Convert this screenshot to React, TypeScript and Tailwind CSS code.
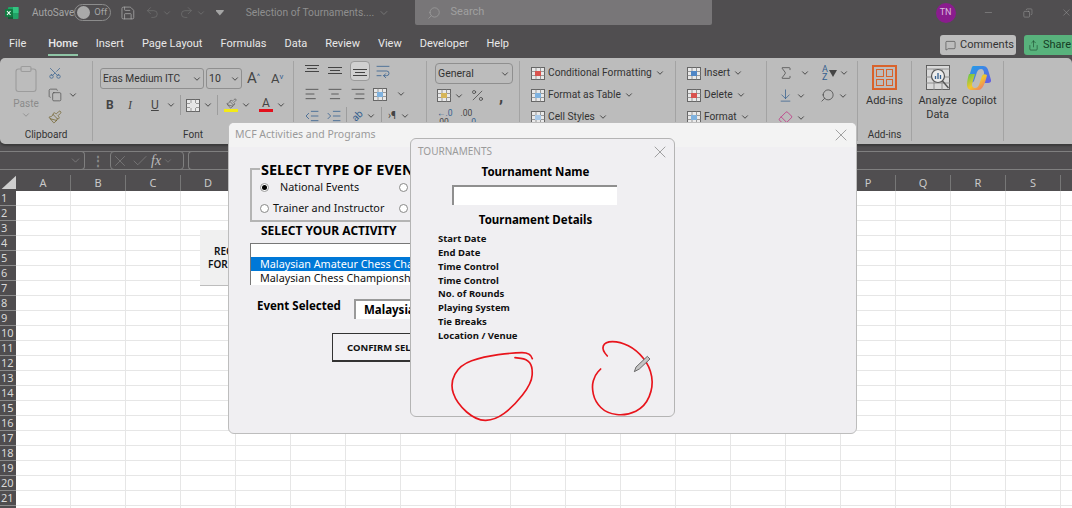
import {
  AlignCenter, AlignLeft, AlignRight, ArrowDownToLine, Check, ChevronDown, Clipboard, Copy, Eraser, IndentDecrease, IndentIncrease,
  MessageSquare, Minus, Paintbrush, Percent, Redo2, Save, Scissors, Search, Share, Sigma, Undo2, WrapText, X,
} from "lucide-react";

const COLUMNS = "ABCDEFGHIJKLMNOPQRST".split("");
const ROWS = Array.from({ length: 22 }, (_, i) => i + 1);
const TABS = ["File", "Home", "Insert", "Page Layout", "Formulas", "Data", "Review", "View", "Developer", "Help"];
const DETAILS = ["Start Date", "End Date", "Time Control", "Time Control", "No. of Rounds", "Playing System", "Tie Breaks", "Location / Venue"];

const LEFT_CIRCLE: [number, number][] = [[397, 686], [392, 668], [340, 668], [250, 680], [180, 705], [150, 760], [170, 820], [230, 872], [285, 870], [340, 830], [395, 760], [398, 710], [380, 687], [345, 683]];
const RIGHT_CIRCLE: [number, number][] = [[622, 678], [605, 660], [615, 635], [660, 635], [710, 660], [750, 710], [760, 770], [735, 830], [680, 857], [620, 850], [585, 815], [575, 770], [585, 735], [602, 717]];

function smoothPath(points: [number, number][]) {
  let d = `M${points[0][0]} ${points[0][1]}`;
  for (let i = 1; i < points.length - 1; i++) {
    const [x, y] = points[i];
    const [nx, ny] = points[i + 1];
    d += ` Q${x} ${y} ${(x + nx) / 2} ${(y + ny) / 2}`;
  }
  const last = points[points.length - 1];
  return `${d} L${last[0]} ${last[1]}`;
}

function Caret({ className = "" }: { className?: string }) {
  return <ChevronDown size={10} strokeWidth={2} className={`shrink-0 text-[#333] ${className}`} />;
}

function Lines({ align }: { align: "left" | "center" | "right" }) {
  const Icon = align === "left" ? AlignLeft : align === "center" ? AlignCenter : AlignRight;
  return <Icon size={16} strokeWidth={1.2} className="shrink-0 text-[#444]" />;
}

// vertical alignment buttons: three rules pushed to the top, middle or bottom
function VerticalLines({ offset }: { offset: number }) {
  return (
    <svg width="16" height="14" viewBox="0 0 16 14" stroke="#444" strokeWidth="1" className="shrink-0">
      <path d={`M1 ${1.5 + offset}h14M3 ${4.5 + offset}h10M1 ${7.5 + offset}h14`} />
    </svg>
  );
}

function ExcelLogo() {
  return (
    <svg width="14" height="14" viewBox="0 0 14 14">
      <rect x="3" y="1" width="10.5" height="12" rx="1" fill="#21a366" />
      <rect x="8" y="1" width="5.5" height="6" fill="#33c481" />
      <rect x="3" y="7" width="5" height="6" fill="#185c37" />
      <rect x="0" y="3" width="8" height="8" rx="1" fill="#107c41" />
      <path d="M2 5l3.5 4M5.5 5L2 9" stroke="#fff" strokeWidth="1.1" />
    </svg>
  );
}

function CopilotLogo() {
  return (
    <svg width="26" height="26" viewBox="0 0 26 26">
      <defs>
        <linearGradient id="cop1" x1="0" y1="0" x2="1" y2="1">
          <stop offset="0" stopColor="#1fa2e8" />
          <stop offset="1" stopColor="#6a5be0" />
        </linearGradient>
        <linearGradient id="cop2" x1="0" y1="0" x2="1" y2="1">
          <stop offset="0" stopColor="#58c84a" />
          <stop offset="0.5" stopColor="#f3c62d" />
          <stop offset="1" stopColor="#ec5e7e" />
        </linearGradient>
      </defs>
      <path d="M8 1h9c4 0 5 3 6 7l2 7c.5 2-1 3-3 3h-6l2-9c.5-3-1-5-3-5-2 0-3 1-4 3L8 16c-1 2-4 2-6 1 1-5 3-12 4-15 .4-.8 1-1 2-1z" fill="url(#cop1)" />
      <path d="M3 9h6l-3 10c-.5 2 1 4 3 4 2 0 3-1 4-3l3-9c1-2 3-2 5-1-1 5-3 11-5 13-1 1-2 2-4 2H6c-3 0-5-2-5-5 0-4 1-8 2-11z" fill="url(#cop2)" />
    </svg>
  );
}

function AnalyzeIcon() {
  return (
    <svg width="24" height="25" viewBox="0 0 24 25" fill="none" stroke="#555" strokeWidth="0.9">
      <rect x="0.5" y="0.5" width="23" height="24" fill="#d9d9d9" />
      <path d="M0 4h24M0 12h24M0 18h24M8 4v21M16 4v21" stroke="#8a8a8a" />
      <circle cx="12" cy="11" r="6.5" fill="#ececec" strokeWidth="1.2" />
      <path d="M9.5 14v-3M12 14V8M14.5 14v-4" stroke="#35608f" strokeWidth="1.3" />
      <path d="M16.5 16l6 7" strokeWidth="1.4" />
    </svg>
  );
}

function TableIcon({ tone }: { tone: string }) {
  return (
    <svg width="14" height="13" viewBox="0 0 14 13" fill="none" className="shrink-0">
      <rect x="0.5" y="0.5" width="13" height="12" fill="#e9e9e9" stroke="#666" />
      <path d="M0 4.5h14M0 8.5h14M5 0v13M9.5 0v13" stroke="#777" strokeWidth="0.7" />
      <rect x="4" y="4" width="6" height="5" fill={tone} />
    </svg>
  );
}

function RibbonGroup({ width, label, children }: { width: string; label?: string; children: React.ReactNode }) {
  return (
    <div className={`flex h-full shrink-0 flex-col border-r border-[#a3a3a3] ${width}`}>
      <div className="min-h-0 flex-1">{children}</div>
      {label ? <div className="text-center text-[10px] leading-[12px] text-[#333]">{label}</div> : null}
    </div>
  );
}

function StackItem({ icon, label }: { icon: React.ReactNode; label: string }) {
  return (
    <div className="flex h-[22px] items-center gap-[3px] whitespace-nowrap text-[10.2px] text-[#333]">
      {icon}
      <span>{label}</span>
      <Caret />
    </div>
  );
}

function ActivitiesDialog() {
  return (
    <div className="absolute left-[228px] top-[122px] h-[312px] w-[629px] overflow-hidden rounded-[6px] border border-[#bdbdbd] bg-[#f0eff2] font-['Noto_Sans',sans-serif]">
      <div className="flex h-[24px] items-center justify-between bg-[#f3f3f3] pl-[6px] pr-[5px] text-[10.5px] text-[#9a9a9a]">
        <span>MCF Activities and Programs</span>
        <X size={20} strokeWidth={0.8} className="text-[#777]" />
      </div>
      <div className="ml-[21px] mt-[21px] h-[54px] w-[300px] border-2 border-r-0 border-[#b4b4b4]">
        <div className="-mt-[9px] ml-[8px] w-fit whitespace-nowrap bg-[#f0eff2] px-[1px] text-[14.5px] font-bold leading-[17px] text-black">
          SELECT TYPE OF EVENT
        </div>
        <div className="-mt-[1px] flex h-[21px] items-center text-[10.8px] text-[#111]">
          <span className="ml-[8px] flex size-[9px] shrink-0 items-center justify-center rounded-full border border-[#999] bg-white">
            <span className="size-[5px] rounded-full bg-black" />
          </span>
          <span className="ml-[11px] w-[119px] shrink-0">National Events</span>
          <span className="size-[9px] shrink-0 rounded-full border border-[#888] bg-white" />
        </div>
        <div className="flex h-[21px] items-center text-[10.8px] text-[#111]">
          <span className="ml-[8px] size-[9px] shrink-0 rounded-full border border-[#888] bg-white" />
          <span className="ml-[4px] w-[126px] shrink-0">Trainer and Instructor</span>
          <span className="size-[9px] shrink-0 rounded-full border border-[#888] bg-white" />
          <span className="ml-[2px]">S</span>
        </div>
      </div>
      <div className="ml-[32px] mt-[1px] text-[12px] font-bold leading-[15px] text-black">SELECT YOUR ACTIVITY</div>
      <div className="ml-[21px] mt-[5px] h-[42px] w-[300px] overflow-hidden border-l border-t border-[#777] bg-white text-[10.8px] leading-[14px]">
        <div className="h-[13px]" />
        <div className="whitespace-nowrap bg-[#0078d7] pl-[9px] text-white">Malaysian Amateur Chess Championship</div>
        <div className="whitespace-nowrap pl-[9px] text-[#111]">Malaysian Chess Championship</div>
      </div>
      <div className="ml-[28px] mt-[14px] flex items-start">
        <span className="w-[97px] shrink-0 text-[11.5px] font-bold leading-[14px] text-black">Event Selected</span>
        <span className="h-[20px] w-[100px] border-l-2 border-t-2 border-[#9a9a9a] bg-white pl-[8px] text-[11.5px] font-bold leading-[18px] text-black">
          Malaysian
        </span>
      </div>
      <div className="ml-[103px] mt-[14px] h-[29px] w-[180px] whitespace-nowrap border border-b-2 border-[#333] bg-[#f2f1f4] pl-[14px] text-[9.5px] font-bold leading-[27px] text-[#111]">
        CONFIRM SELECTION
      </div>
    </div>
  );
}

function TournamentsDialog() {
  return (
    <div className="absolute left-[410px] top-[138px] flex h-[279px] w-[265px] flex-col rounded-[6px] border border-[#b4b4b4] bg-[#f0eff2] font-['Noto_Sans',sans-serif]">
      <div className="flex h-[25px] shrink-0 items-center justify-between pl-[7px] pr-[4px] text-[10px] text-[#9a9a9a]">
        <span>TOURNAMENTS</span>
        <X size={20} strokeWidth={0.8} className="text-[#777]" />
      </div>
      <div className="pr-[14px] text-center text-[11.5px] font-bold leading-[16px] text-black">Tournament Name</div>
      <div className="ml-[41px] mt-[5px] h-[20px] w-[165px] shrink-0 border-l-2 border-t-2 border-[#8f8f8f] bg-white" />
      <div className="mt-[7px] pr-[14px] text-center text-[11.5px] font-bold leading-[16px] text-black">Tournament Details</div>
      <div className="ml-[27px] mt-[4px] text-[9.5px] font-bold leading-[13.85px] text-[#111]">
        {DETAILS.map((detail, index) => (
          <div key={index}>{detail}</div>
        ))}
      </div>
      {/* pen annotation drawn over the form, runs past the bottom edge */}
      <svg className="absolute left-0 top-0 h-[277px] w-[263px] overflow-visible" viewBox="33 27 789 831" fill="none">
        <path d={smoothPath(LEFT_CIRCLE)} stroke="#e8141c" strokeWidth="5" strokeLinecap="round" />
        <path d={smoothPath(RIGHT_CIRCLE)} stroke="#e8141c" strokeWidth="5" strokeLinecap="round" />
        <path d="M703 725l5-14 34-32 8 8-32 30z" fill="#c4c4c4" stroke="#555" strokeWidth="2.5" />
      </svg>
    </div>
  );
}

function TitleBar() {
  return (
    <div className="flex h-[25px] shrink-0 items-center whitespace-nowrap text-[10px] text-[#a5a5a5]">
      <span className="ml-[5px]"><ExcelLogo /></span>
      <span className="ml-[13px] w-[43px]">AutoSave</span>
      <span className="flex h-[17px] w-[37px] items-center rounded-full border border-[#8c8c8c] pl-[2px]">
        <span className="size-[13px] rounded-full bg-[#a9a9a9]" />
        <span className="ml-[4px] text-[9.5px]">Off</span>
      </span>
      <Save size={16} strokeWidth={1.2} className="ml-[9px] text-[#a8a8a8]" />
      <Undo2 size={15} strokeWidth={1.2} className="ml-[10px] text-[#707070]" />
      <Caret className="ml-[2px] !text-[#707070]" />
      <Redo2 size={15} strokeWidth={1.2} className="ml-[7px] text-[#707070]" />
      <Caret className="ml-[2px] !text-[#707070]" />
      <span className="ml-[10px] h-[6px] w-[8px] bg-[#a5a5a5] [clip-path:polygon(0_0,100%_0,100%_25%,50%_100%,0_25%)]" />
      <span className="ml-[22px] w-[132px] shrink-0 text-[10.3px] text-[#8f8f8f]">Selection of Tournaments....</span>
      <ChevronDown size={12} strokeWidth={1.2} className="text-[#8f8f8f]" />
      <div className="ml-[25px] flex h-[25px] w-[297px] shrink-0 items-center rounded-b-[2px] bg-[#787678] pl-[12px] text-[#a0a0a0]">
        <Search size={14} strokeWidth={1.2} className="-scale-x-100" />
        <span className="ml-[10px] text-[11px]">Search</span>
      </div>
      <span className="ml-[224px] flex size-[20px] shrink-0 items-center justify-center rounded-full bg-[#8a1c8e] text-[9px] text-[#d9b8dc]">TN</span>
      <Minus size={11} strokeWidth={1} className="ml-[27px]" />
      <Copy size={10} strokeWidth={1.2} className="ml-[30px] -scale-x-100" />
      <X size={11} strokeWidth={1} className="ml-[28px]" />
    </div>
  );
}

function TabBar() {
  return (
    <div className="flex h-[33px] shrink-0 items-end pb-[2px] text-[11px] text-[#e8e8e8]">
      <div className="ml-[9px] flex gap-[18px]">
        {TABS.map((tab) => (
          <span key={tab} className={tab === "Home" ? "h-[20px] border-b-2 border-[#8fc5a6] font-medium leading-[16px]" : "h-[20px] leading-[16px] first:mr-[4px]"}>
            {tab}
          </span>
        ))}
      </div>
      <div className="ml-auto flex items-center gap-[8px] pb-[1px]">
        <span className="flex h-[20px] w-[76px] items-center gap-[4px] rounded-[3px] bg-[#bdbdbd] pl-[5px] text-[11px] text-[#333]">
          <MessageSquare size={11} strokeWidth={1.2} />
          Comments
        </span>
        <span className="flex h-[20px] w-[48px] items-center gap-[4px] rounded-l-[3px] bg-[#58b27c] pl-[4px] text-[11px] text-[#153d25]">
          <Share size={11} strokeWidth={1.2} />
          Share
        </span>
      </div>
    </div>
  );
}

function Ribbon() {
  return (
    <div className="flex h-[86px] shrink-0 rounded-t-[5px] rounded-bl-[5px] bg-[#bcbcbc] py-[3px] shadow-[0_2px_2px_#3a3a3a]">
      <RibbonGroup width="w-[93px]" label="Clipboard">
        <div className="flex">
          <div className="ml-[13px] mt-[3px] flex w-[26px] flex-col items-center text-[10px] leading-[13px] text-[#8b8b8b]">
            <Clipboard size={30} strokeWidth={0.9} className="text-[#9c9c9c]" />
            <span className="mt-[3px]">Paste</span>
            <Caret className="!text-[#8b8b8b]" />
          </div>
          <div className="ml-[9px] mt-[5px] flex flex-col gap-[8px]">
            <Scissors size={14} strokeWidth={1.2} className="rotate-[-90deg] text-[#35608f]" />
            <span className="flex items-center gap-[6px]">
              <Copy size={14} strokeWidth={1.1} className="text-[#444]" />
              <Caret />
            </span>
            <Paintbrush size={14} strokeWidth={1.2} className="text-[#6b5a20]" />
          </div>
        </div>
      </RibbonGroup>
      <RibbonGroup width="w-[201px]" label="Font">
        <div className="mt-[7px] flex items-center pl-[7px]">
          <div className="flex h-[21px] w-[104px] items-center justify-between rounded-[3px] border border-[#8f8f8f] pl-[2px] pr-[1px] text-[10.2px] text-[#333]">
            Eras Medium ITC
            <Caret />
          </div>
          <div className="ml-[2px] flex h-[21px] w-[36px] items-center justify-between rounded-[3px] border border-[#8f8f8f] pl-[2px] pr-[1px] text-[10.5px] text-[#333]">
            10
            <Caret />
          </div>
          <span className="ml-[5px] w-[24px] text-[15px] leading-none text-[#444]">A<sup className="text-[8px] text-[#35608f]">^</sup></span>
          <span className="text-[13px] leading-none text-[#444]">A<sup className="text-[8px] text-[#35608f]">v</sup></span>
        </div>
        <div className="mt-[6px] flex h-[20px] items-center pl-[13px] text-[12px] text-[#444]">
          <span className="w-[22px] font-bold">B</span>
          <span className="w-[23px] font-['Liberation_Serif',serif] italic">I</span>
          <span className="w-[15px] underline">U</span>
          <Caret />
          <span className="ml-[4px] h-[20px] w-px bg-[#9d9d9d]" />
          <span className="ml-[5px]"><TableIcon tone="#e4e4e4" /></span>
          <Caret className="ml-[3px]" />
          <span className="ml-[4px] h-[20px] w-px bg-[#9d9d9d]" />
          <span className="ml-[6px] flex w-[14px] flex-col items-center">
            <Paintbrush size={11} strokeWidth={1.2} />
            <span className="h-[3px] w-[14px] bg-[#f3ea17]" />
          </span>
          <Caret className="ml-[3px]" />
          <span className="ml-[8px] flex w-[14px] flex-col items-center text-[12px] leading-[11px]">
            A
            <span className="h-[3px] w-[14px] bg-[#e3101c]" />
          </span>
          <Caret className="ml-[3px]" />
        </div>
      </RibbonGroup>
      <RibbonGroup width="w-[133px]">
        <div className="flex flex-col gap-[6px] pl-[10px] pt-[1px]">
          <div className="flex h-[18px] items-center gap-[7px]">
            <VerticalLines offset={0} />
            <VerticalLines offset={2} />
            <span className="flex size-[20px] items-center justify-center rounded-[4px] border border-[#9a9a9a] bg-[#d0d0d0]"><VerticalLines offset={4} /></span>
            <WrapText size={16} strokeWidth={1.2} className="-ml-[2px] text-[#35608f]" />
          </div>
          <div className="flex h-[16px] items-center gap-[7px]">
            <Lines align="left" />
            <Lines align="center" />
            <Lines align="right" />
            <TableIcon tone="#7fb2df" />
            <Caret className="ml-[2px]" />
          </div>
          <div className="flex h-[16px] items-center text-[#35608f]">
            <IndentDecrease size={16} strokeWidth={1.2} />
            <IndentIncrease size={16} strokeWidth={1.2} className="ml-[6px]" />
            <span className="ml-[4px] h-[18px] w-px bg-[#9d9d9d]" />
            <span className="ml-[5px] rotate-[-45deg] text-[10px] leading-none">ab</span>
            <Caret className="ml-[3px]" />
            <span className="ml-[5px] h-[18px] w-px bg-[#9d9d9d]" />
            <span className="ml-[6px] text-[10px] leading-none text-[#444]">›¶</span>
            <Caret className="ml-[4px]" />
          </div>
        </div>
      </RibbonGroup>
      <RibbonGroup width="w-[93px]">
        <div className="pl-[8px] pt-[2px]">
          <div className="flex h-[21px] w-[78px] items-center justify-between rounded-[4px] border border-[#8f8f8f] pl-[2px] pr-[2px] text-[10.5px] text-[#333]">
            General
            <Caret />
          </div>
          <div className="mt-[4px] flex items-center pl-[2px] text-[#444]">
            <TableIcon tone="#d6b65a" />
            <Caret className="ml-[3px]" />
            <Percent size={15} strokeWidth={1.2} className="ml-[6px]" />
            <span className="ml-[14px] text-[17px] font-bold leading-[10px]">,</span>
          </div>
          <div className="mt-[6px] flex gap-[8px] pl-[2px] text-[8.5px] leading-[9px] text-[#35608f]">
            <span>←.0<br /><span className="text-[#444]">.00</span></span>
            <span><span className="text-[#444]">.00</span><br />→.0</span>
          </div>
        </div>
      </RibbonGroup>
      <RibbonGroup width="w-[156px]">
        <div className="flex flex-col pl-[11px] pt-[1px]">
          <StackItem icon={<TableIcon tone="#d9534f" />} label="Conditional Formatting" />
          <StackItem icon={<TableIcon tone="#7fb2df" />} label="Format as Table" />
          <StackItem icon={<TableIcon tone="#a9c9e8" />} label="Cell Styles" />
        </div>
      </RibbonGroup>
      <RibbonGroup width="w-[91px]">
        <div className="flex flex-col pl-[11px] pt-[1px]">
          <StackItem icon={<TableIcon tone="#4f86c6" />} label="Insert" />
          <StackItem icon={<TableIcon tone="#d9534f" />} label="Delete" />
          <StackItem icon={<TableIcon tone="#7fb2df" />} label="Format" />
        </div>
      </RibbonGroup>
      <RibbonGroup width="w-[91px]">
        <div className="flex flex-col gap-[7px] pl-[11px] pt-[4px] text-[#444]">
          <div className="flex items-center">
            <Sigma size={16} strokeWidth={1.1} />
            <Caret className="ml-[6px]" />
            <span className="ml-[12px] text-[9px] leading-[8px] text-[#35608f]">A<br />Z</span>
            <span className="ml-[1px] size-0 border-x-[4px] border-t-[7px] border-x-transparent border-t-[#444]" />
            <Caret className="ml-[2px]" />
          </div>
          <div className="flex items-center">
            <ArrowDownToLine size={15} strokeWidth={1.2} className="text-[#35608f]" />
            <Caret className="ml-[3px]" />
            <Search size={15} strokeWidth={1.2} className="ml-[14px] -scale-x-100" />
            <Caret className="ml-[3px]" />
          </div>
          <div className="flex items-center">
            <Eraser size={15} strokeWidth={1.2} className="text-[#c0297f]" />
            <Caret className="ml-[3px]" />
          </div>
        </div>
      </RibbonGroup>
      <RibbonGroup width="w-[54px]" label="Add-ins">
        <div className="flex flex-col items-center pt-[4px] text-[11px] text-[#333]">
          <span className="grid size-[25px] grid-cols-2 gap-[2px] border-2 border-[#d9622b] p-[2px]">
            <span className="border border-[#d9622b]" />
            <span className="border border-[#d9622b]" />
            <span className="border border-[#d9622b]" />
            <span className="border border-[#d9622b]" />
          </span>
          <span className="mt-[4px] leading-[14px]">Add-ins</span>
        </div>
      </RibbonGroup>
      <RibbonGroup width="w-[92px]">
        <div className="flex justify-center gap-[5px] pt-[4px] text-center text-[11px] leading-[14px] text-[#333]">
          <div className="flex flex-col items-center">
            <AnalyzeIcon />
            <span className="mt-[4px]">Analyze<br />Data</span>
          </div>
          <div className="flex flex-col items-center">
            <CopilotLogo />
            <span className="mt-[3px]">Copilot</span>
          </div>
        </div>
      </RibbonGroup>
    </div>
  );
}

function FormulaBar() {
  return (
    <div className="mt-[7px] flex h-[19px] shrink-0 items-center border-y border-[#7a797a] text-[#8c8c8c]">
      <div className="flex h-[19px] w-[85px] items-center justify-end rounded-r-[4px] border border-l-0 border-[#7f7f7f] pr-[2px]">
        <ChevronDown size={13} strokeWidth={1.2} />
      </div>
      <span className="ml-[7px] text-[12px] font-bold leading-none">⋮</span>
      <div className="ml-[6px] flex h-[19px] w-[74px] items-center gap-[2px] rounded-[4px] border border-[#7f7f7f]">
        <X size={18} strokeWidth={0.8} />
        <Check size={18} strokeWidth={0.8} />
        <span className="font-['Liberation_Serif',serif] text-[14px] italic leading-none text-[#bbb]">fx</span>
        <ChevronDown size={10} strokeWidth={1.2} />
      </div>
      <div className="ml-[4px] h-[19px] flex-1 rounded-l-[4px] border border-r-0 border-[#7f7f7f]" />
    </div>
  );
}

function Sheet() {
  return (
    <div className="mt-[2px] font-['Noto_Sans',sans-serif]">
      <div className="flex h-[19px] overflow-hidden text-[11px] leading-[19px] text-[#c9c9c9]">
        <div className="w-[16px] shrink-0 bg-[#cfcfcf] [clip-path:polygon(100%_20%,100%_90%,10%_90%)]" />
        {COLUMNS.map((column) => (
          <div key={column} className="mt-[3px] h-[16px] w-[55px] shrink-0 border-r border-[#777] text-center leading-[15px]">
            {column}
          </div>
        ))}
      </div>
      {ROWS.map((row) => (
        <div key={row} className="flex h-[15px] overflow-hidden">
          <div className="w-[16px] shrink-0 border-b border-[#8a8a8a] bg-[#4f4d4f] pl-[1px] text-[11px] leading-[14px] text-[#d8d8d8]">{row}</div>
          <div className="flex flex-1 bg-white">
            {COLUMNS.map((column) => (
              <div key={column} className="h-[15px] w-[55px] shrink-0 border-b border-r border-[#e6e6e6]" />
            ))}
          </div>
        </div>
      ))}
    </div>
  );
}

export default function App() {
  return (
    <div className="relative h-[508px] w-[1072px] overflow-hidden bg-[#504e50] font-['Roboto',sans-serif]">
      <TitleBar />
      <TabBar />
      <Ribbon />
      <FormulaBar />
      <Sheet />
      {/* worksheet button sitting behind the forms */}
      <div className="absolute left-[200px] top-[230px] flex h-[56px] w-[40px] flex-col justify-center border-b border-[#bdbdbd] bg-[#f0f0f0] pl-[8px] font-['Noto_Sans',sans-serif] text-[10px] font-semibold leading-[13px] text-[#111]">
        <span className="pl-[6px]">REG</span>
        <span>FOR</span>
      </div>
      <ActivitiesDialog />
      <TournamentsDialog />
    </div>
  );
}
